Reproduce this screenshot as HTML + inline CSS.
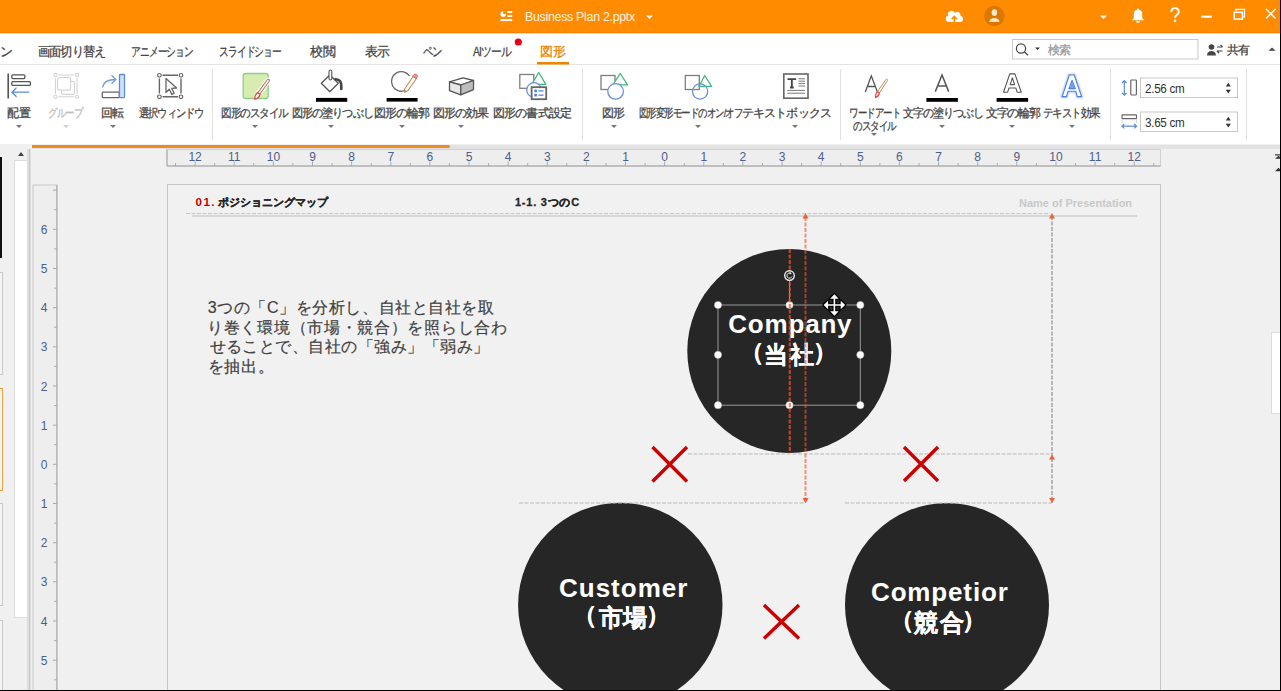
<!DOCTYPE html>
<html lang="ja">
<head>
<meta charset="utf-8">
<style>
html,body{margin:0;padding:0}
body{width:1281px;height:691px;overflow:hidden;position:relative;background:#f0f0f0;font-family:"Liberation Sans",sans-serif;color:#333}
.a{position:absolute}
.t{position:absolute;white-space:nowrap;line-height:1}
svg{position:absolute;left:0;top:0;overflow:visible}
.rn{font-size:12px;color:#4a5f8a}
</style>
</head>
<body>
<!-- chrome backgrounds -->
<div class="a" style="left:0;top:0;width:1281px;height:33px;background:#ff8b00"></div>
<div class="a" style="left:0;top:32px;width:1281px;height:1px;background:#f88000"></div>
<div class="a" style="left:0;top:33px;width:1281px;height:111px;background:#fff"></div>
<div class="a" style="left:0;top:64px;width:1281px;height:1px;background:#e4e4e4"></div>
<div class="a" style="left:0;top:33px;width:1281px;height:1px;background:#ffd9a8"></div>
<div class="a" style="left:32px;top:145px;width:1248px;height:4px;background:#e2e2e2"></div>
<div class="a" style="left:32px;top:145px;width:418px;height:3px;background:#f08a1c;border-radius:0 2px 2px 0"></div>

<!-- left panel -->
<div class="a" style="left:0;top:157px;width:2px;height:101px;background:#111"></div>
<div class="a" style="left:-100px;top:272px;width:101px;height:101px;border:1px solid #c8c8c8;background:#f4f4f4"></div>
<div class="a" style="left:-100px;top:388px;width:101px;height:101px;border:1.5px solid #f0a040;background:#f4f4f4"></div>
<div class="a" style="left:-100px;top:503px;width:101px;height:101px;border:1px solid #c8c8c8;background:#f4f4f4"></div>
<div class="a" style="left:-100px;top:620px;width:101px;height:101px;border:1px solid #c8c8c8;background:#f4f4f4"></div>
<div class="a" style="left:14px;top:160px;width:12px;height:456px;background:#fff;border:1px solid #dcdcdc"></div>
<div class="a" style="left:18px;top:152px;width:0;height:0;border-left:3px solid transparent;border-right:3px solid transparent;border-bottom:4px solid #444"></div>
<div class="a" style="left:27px;top:149px;width:4px;height:542px;background:#dedede"></div>
<div class="a" style="left:29px;top:149px;width:1px;height:542px;background:#c8c8c8"></div>

<!-- right scroll -->
<svg width="1281" height="691"><g fill="#333"><rect x="1275" y="154.3" width="6" height="1.2"/><path d="M1275 158.8 L1278.5 155.8 L1282 158.8Z"/><path d="M1275 171.3 L1278.5 167.8 L1282 171.3Z"/></g></svg>
<div class="a" style="left:1271px;top:332px;width:9px;height:80px;background:#fff;border:1px solid #dcdcdc;border-right:none"></div>

<!-- rulers -->
<svg width="1281" height="691">
<g id="hruler">
<rect x="167" y="149.5" width="993.5" height="16.5" fill="#eeeeee" stroke="#d0d0d0" stroke-width="1"/>
<line x1="167" y1="166" x2="1160.5" y2="166" stroke="#b4b4b4" stroke-width="1.3"/><line x1="167" y1="149.5" x2="167" y2="166" stroke="#b4b4b4" stroke-width="1.3"/>
</g>
<g id="vruler">
<rect x="33" y="185" width="24" height="600" fill="#eeeeee" stroke="#c8c8c8" stroke-width="1"/>
<line x1="56.8" y1="185" x2="56.8" y2="691" stroke="#b4b4b4" stroke-width="1.3"/>
</g>
<g stroke="#aaaaaa" stroke-width="1" id="ticks"><line x1="175.5" y1="163" x2="175.5" y2="166" /><line x1="195.1" y1="161.5" x2="195.1" y2="166" /><line x1="214.7" y1="163" x2="214.7" y2="166" /><line x1="234.2" y1="161.5" x2="234.2" y2="166" /><line x1="253.8" y1="163" x2="253.8" y2="166" /><line x1="273.4" y1="161.5" x2="273.4" y2="166" /><line x1="292.9" y1="163" x2="292.9" y2="166" /><line x1="312.5" y1="161.5" x2="312.5" y2="166" /><line x1="332.1" y1="163" x2="332.1" y2="166" /><line x1="351.6" y1="161.5" x2="351.6" y2="166" /><line x1="371.2" y1="163" x2="371.2" y2="166" /><line x1="390.8" y1="161.5" x2="390.8" y2="166" /><line x1="410.3" y1="163" x2="410.3" y2="166" /><line x1="429.9" y1="161.5" x2="429.9" y2="166" /><line x1="449.4" y1="163" x2="449.4" y2="166" /><line x1="469.0" y1="161.5" x2="469.0" y2="166" /><line x1="488.6" y1="163" x2="488.6" y2="166" /><line x1="508.1" y1="161.5" x2="508.1" y2="166" /><line x1="527.7" y1="163" x2="527.7" y2="166" /><line x1="547.3" y1="161.5" x2="547.3" y2="166" /><line x1="566.8" y1="163" x2="566.8" y2="166" /><line x1="586.4" y1="161.5" x2="586.4" y2="166" /><line x1="606.0" y1="163" x2="606.0" y2="166" /><line x1="625.5" y1="161.5" x2="625.5" y2="166" /><line x1="645.1" y1="163" x2="645.1" y2="166" /><line x1="664.7" y1="161.5" x2="664.7" y2="166" /><line x1="684.2" y1="163" x2="684.2" y2="166" /><line x1="703.8" y1="161.5" x2="703.8" y2="166" /><line x1="723.4" y1="163" x2="723.4" y2="166" /><line x1="742.9" y1="161.5" x2="742.9" y2="166" /><line x1="762.5" y1="163" x2="762.5" y2="166" /><line x1="782.1" y1="161.5" x2="782.1" y2="166" /><line x1="801.6" y1="163" x2="801.6" y2="166" /><line x1="821.2" y1="161.5" x2="821.2" y2="166" /><line x1="840.7" y1="163" x2="840.7" y2="166" /><line x1="860.3" y1="161.5" x2="860.3" y2="166" /><line x1="879.9" y1="163" x2="879.9" y2="166" /><line x1="899.4" y1="161.5" x2="899.4" y2="166" /><line x1="919.0" y1="163" x2="919.0" y2="166" /><line x1="938.6" y1="161.5" x2="938.6" y2="166" /><line x1="958.1" y1="163" x2="958.1" y2="166" /><line x1="977.7" y1="161.5" x2="977.7" y2="166" /><line x1="997.3" y1="163" x2="997.3" y2="166" /><line x1="1016.8" y1="161.5" x2="1016.8" y2="166" /><line x1="1036.4" y1="163" x2="1036.4" y2="166" /><line x1="1056.0" y1="161.5" x2="1056.0" y2="166" /><line x1="1075.5" y1="163" x2="1075.5" y2="166" /><line x1="1095.1" y1="161.5" x2="1095.1" y2="166" /><line x1="1114.7" y1="163" x2="1114.7" y2="166" /><line x1="1134.2" y1="161.5" x2="1134.2" y2="166" /><line x1="1153.8" y1="163" x2="1153.8" y2="166" /><line x1="53" y1="190.1" x2="57" y2="190.1" /><line x1="54" y1="209.7" x2="57" y2="209.7" /><line x1="53" y1="229.3" x2="57" y2="229.3" /><line x1="54" y1="248.9" x2="57" y2="248.9" /><line x1="53" y1="268.5" x2="57" y2="268.5" /><line x1="54" y1="288.1" x2="57" y2="288.1" /><line x1="53" y1="307.6" x2="57" y2="307.6" /><line x1="54" y1="327.2" x2="57" y2="327.2" /><line x1="53" y1="346.8" x2="57" y2="346.8" /><line x1="54" y1="366.4" x2="57" y2="366.4" /><line x1="53" y1="386.0" x2="57" y2="386.0" /><line x1="54" y1="405.6" x2="57" y2="405.6" /><line x1="53" y1="425.2" x2="57" y2="425.2" /><line x1="54" y1="444.7" x2="57" y2="444.7" /><line x1="53" y1="464.3" x2="57" y2="464.3" /><line x1="54" y1="483.9" x2="57" y2="483.9" /><line x1="53" y1="503.5" x2="57" y2="503.5" /><line x1="54" y1="523.1" x2="57" y2="523.1" /><line x1="53" y1="542.7" x2="57" y2="542.7" /><line x1="54" y1="562.2" x2="57" y2="562.2" /><line x1="53" y1="581.8" x2="57" y2="581.8" /><line x1="54" y1="601.4" x2="57" y2="601.4" /><line x1="53" y1="621.0" x2="57" y2="621.0" /><line x1="54" y1="640.6" x2="57" y2="640.6" /><line x1="53" y1="660.2" x2="57" y2="660.2" /><line x1="54" y1="679.8" x2="57" y2="679.8" /></g>
</svg>
<span class="t rn" style="left:175.1px;top:151px;width:40px;text-align:center">12</span><span class="t rn" style="left:214.2px;top:151px;width:40px;text-align:center">11</span><span class="t rn" style="left:253.4px;top:151px;width:40px;text-align:center">10</span><span class="t rn" style="left:292.5px;top:151px;width:40px;text-align:center">9</span><span class="t rn" style="left:331.6px;top:151px;width:40px;text-align:center">8</span><span class="t rn" style="left:370.8px;top:151px;width:40px;text-align:center">7</span><span class="t rn" style="left:409.9px;top:151px;width:40px;text-align:center">6</span><span class="t rn" style="left:449.0px;top:151px;width:40px;text-align:center">5</span><span class="t rn" style="left:488.1px;top:151px;width:40px;text-align:center">4</span><span class="t rn" style="left:527.3px;top:151px;width:40px;text-align:center">3</span><span class="t rn" style="left:566.4px;top:151px;width:40px;text-align:center">2</span><span class="t rn" style="left:605.5px;top:151px;width:40px;text-align:center">1</span><span class="t rn" style="left:644.7px;top:151px;width:40px;text-align:center">0</span><span class="t rn" style="left:683.8px;top:151px;width:40px;text-align:center">1</span><span class="t rn" style="left:722.9px;top:151px;width:40px;text-align:center">2</span><span class="t rn" style="left:762.1px;top:151px;width:40px;text-align:center">3</span><span class="t rn" style="left:801.2px;top:151px;width:40px;text-align:center">4</span><span class="t rn" style="left:840.3px;top:151px;width:40px;text-align:center">5</span><span class="t rn" style="left:879.4px;top:151px;width:40px;text-align:center">6</span><span class="t rn" style="left:918.6px;top:151px;width:40px;text-align:center">7</span><span class="t rn" style="left:957.7px;top:151px;width:40px;text-align:center">8</span><span class="t rn" style="left:996.8px;top:151px;width:40px;text-align:center">9</span><span class="t rn" style="left:1036.0px;top:151px;width:40px;text-align:center">10</span><span class="t rn" style="left:1075.1px;top:151px;width:40px;text-align:center">11</span><span class="t rn" style="left:1114.2px;top:151px;width:40px;text-align:center">12</span><span class="t rn" style="left:34px;top:223.8px;width:20px;text-align:center">6</span><span class="t rn" style="left:34px;top:263.0px;width:20px;text-align:center">5</span><span class="t rn" style="left:34px;top:302.1px;width:20px;text-align:center">4</span><span class="t rn" style="left:34px;top:341.3px;width:20px;text-align:center">3</span><span class="t rn" style="left:34px;top:380.5px;width:20px;text-align:center">2</span><span class="t rn" style="left:34px;top:419.7px;width:20px;text-align:center">1</span><span class="t rn" style="left:34px;top:458.8px;width:20px;text-align:center">0</span><span class="t rn" style="left:34px;top:498.0px;width:20px;text-align:center">1</span><span class="t rn" style="left:34px;top:537.2px;width:20px;text-align:center">2</span><span class="t rn" style="left:34px;top:576.3px;width:20px;text-align:center">3</span><span class="t rn" style="left:34px;top:615.5px;width:20px;text-align:center">4</span><span class="t rn" style="left:34px;top:654.7px;width:20px;text-align:center">5</span>

<!-- slide -->
<div class="a" style="left:166.5px;top:184px;width:992px;height:600px;background:#f1f1f1;border:1.5px solid #c6c6c6"></div>

<svg width="1281" height="691">
<!-- header lines -->
<line x1="186" y1="213.5" x2="1050" y2="213.5" stroke="#c6c6c6" stroke-width="1.2" stroke-dasharray="4 1.5"/>
<line x1="192" y1="216" x2="1137" y2="216" stroke="#cccccc" stroke-width="1.5"/>
<!-- circles -->
<circle cx="789.3" cy="351" r="102" fill="#262626"/>
<circle cx="620.3" cy="605" r="102.2" fill="#262626"/>
<circle cx="947" cy="605" r="102" fill="#262626"/>
<!-- guides gray -->
<g stroke="#bababa" stroke-width="1.2" stroke-dasharray="4 1.5" fill="none">
<line x1="688" y1="454" x2="1052" y2="454"/>
<line x1="519" y1="503" x2="805" y2="503"/>
<line x1="845" y1="503" x2="1052" y2="503"/>
</g>
<line x1="1052" y1="216" x2="1052" y2="503" stroke="#a4a4a4" stroke-width="1.5" stroke-dasharray="4 1.5"/>
<!-- orange guide -->

<g fill="#e8643c">
<path d="M802.5 218.5 L805.5 213 L808.5 218.5Z"/>
<path d="M802.5 498 L805.5 503.5 L808.5 498Z"/>
<path d="M1049 218.5 L1052 213 L1055 218.5Z"/>
<path d="M1049 459.5 L1052 454.5 L1055 459.5Z"/>
<path d="M1049 498 L1052 503 L1055 498Z"/>
</g>
<!-- red dashed center -->

<!-- crosses -->
<g stroke="#cc0000" stroke-width="3.4" stroke-linecap="butt">
<path d="M652.5 447 L687 481.5 M687 447 L652.5 481.5"/>
<path d="M904 447 L938 481 M938 447 L904 481"/>
<path d="M764 605 L799 638.5 M799 605 L764 638.5"/>
</g>
</svg>
<!-- title bar icons -->
<svg width="1281" height="691">
<g fill="#fff">
<!-- slide icon -->
<path d="M503.2 14.1 L503.2 11.3 A2.8 2.8 0 1 0 506 14.1Z"/>
<rect x="507.4" y="11.1" width="4.8" height="1.8"/>
<rect x="507.4" y="15.2" width="4.8" height="1.8"/>
<rect x="500.5" y="19.1" width="11.7" height="2"/>
<path d="M646 15.5 h7 l-3.5 3.5z"/>
<!-- cloud -->
<path transform="translate(945.5 0) scale(0.9 1) translate(-945.5 0)" d="M948.5 22 a3.2 3.2 0 0 1 -0.3 -6.3 a4.2 4.2 0 0 1 7.8 -2.8 a3.6 3.6 0 0 1 6.2 2.8 a3.2 3.2 0 0 1 0.4 6.3z"/>
<path d="M1100 15.5 h7 l-3.5 3.5z"/>
<!-- bell -->
<path d="M1138 8.5 a1 1 0 0 1 1 1.2 a4.2 4.5 0 0 1 3.2 4.5 v3.8 l2 2.2 h-12.4 l2 -2.2 v-3.8 a4.2 4.5 0 0 1 3.2 -4.5 a1 1 0 0 1 1 -1.2z"/>
<path d="M1136 21 h4 a2 2 0 0 1 -4 0z"/>
<rect x="1201.3" y="15.6" width="10.5" height="2.2"/>
</g>
<circle cx="994.4" cy="16" r="10.2" fill="#dd7700"/>
<g fill="#ffe8c8">
<ellipse cx="994.4" cy="12.6" rx="2.8" ry="3.4"/>
<path d="M989.3 22 a5.1 4 0 0 1 10.2 0z"/>
</g>
<path d="M954.3 22.5 v-5.8 M951.6 19.2 l2.7 -2.7 l2.7 2.7" stroke="#ff8b00" stroke-width="1.6" fill="none"/>
<g stroke="#fff" fill="none" stroke-width="1.4">
<path d="M1171.3 11.8 a3.7 3.7 0 1 1 5.6 3.1 c-1.4 0.9 -1.9 1.5 -1.9 3.2" stroke-width="1.9"/>
<path d="M1236 11 v-1.6 h8.5 v7.5 h-1.6" stroke-width="1.2"/>
<rect x="1234.2" y="12.3" width="8.2" height="6.8" stroke-width="1.5"/>
<path d="M1266 9 L1275.5 18.5 M1275.5 9 L1266 18.5" stroke-width="1.5"/>
</g>
<circle cx="1175" cy="20.9" r="1.3" fill="#fff"/>

<!-- red dot -->
<circle cx="518.3" cy="42" r="3.6" fill="#e60012"/>
<rect x="537" y="62" width="32" height="2.5" fill="#f08300"/>

<!-- search box -->
<rect x="1012.5" y="39.5" width="185.5" height="19.5" fill="#fff" stroke="#c8c8c8" stroke-width="1"/>
<circle cx="1021" cy="48.5" r="4.6" fill="none" stroke="#444" stroke-width="1.2"/>
<path d="M1024.3 51.8 L1028 55.3" stroke="#444" stroke-width="1.3"/>
<path d="M1035 47.5 h5 l-2.5 2.5z" fill="#333"/>
<!-- share icon -->
<circle cx="1211.5" cy="47" r="2.8" fill="#444"/>
<path d="M1207 55.5 a4.5 4.5 0 0 1 9 0z" fill="#444"/>
<path d="M1217 47 h5.5 M1220.5 45 l2 2 M1217 51 h5.5 M1219 53 l-2 -2" stroke="#444" stroke-width="1.2" fill="none"/>
<path d="M1268.5 50.8 L1272 47.5 L1275.5 50.8z" fill="#444"/>

<!-- separators -->
<g fill="#e0e0e0">
<rect x="212" y="69" width="1" height="71"/>
<rect x="582" y="69" width="1" height="71"/>
<rect x="840" y="69" width="1" height="71"/>
<rect x="1110" y="69" width="1" height="71"/>
<rect x="1246" y="69" width="1" height="71"/>
</g>

<!-- ribbon icons -->
<!-- align -->
<rect x="7.4" y="73.5" width="1.6" height="25" fill="#555"/>
<rect x="11.8" y="74.8" width="13" height="3.8" rx="1" fill="none" stroke="#555" stroke-width="1.3"/>
<rect x="11.8" y="81.6" width="18.6" height="3.8" rx="1" fill="none" stroke="#555" stroke-width="1.3"/>
<path d="M12 92.2 H29.3 M16.5 87.6 L12 92.2 L16.5 96.8" fill="none" stroke="#5b8bd9" stroke-width="1.3"/>
<!-- group (disabled) -->
<g fill="none" stroke="#d4d4d4" stroke-width="1.1">
<circle cx="55.5" cy="75" r="1.6"/><circle cx="77.1" cy="75" r="1.6"/><circle cx="55.5" cy="96.8" r="1.6"/><circle cx="77.1" cy="96.8" r="1.6"/>
<path d="M58.5 75 H74 M58.5 96.8 H74 M55.5 78 V94 M77.1 78 V94"/>
<rect x="61.5" y="81.4" width="13" height="13" rx="1.5" fill="#fff"/>
<rect x="57.6" y="77.5" width="13" height="12.6" rx="1.5" fill="#fff"/>
</g>
<!-- rotate -->
<rect x="102.3" y="92.2" width="17" height="5.5" rx="0.8" fill="#fff" stroke="#666" stroke-width="1.3"/>
<rect x="119.5" y="74.5" width="5" height="23.2" rx="0.8" fill="#cfe1fb" stroke="#5b8bd9" stroke-width="1.3"/>
<path d="M102.4 87.4 C103.5 82 108 79.5 115.5 79.5 M111.5 75.3 L115.8 79.5 L111.5 83.7" fill="none" stroke="#6d9be0" stroke-width="1.3"/>
<!-- select window -->
<g fill="none" stroke="#666" stroke-width="1.2">
<circle cx="159.4" cy="75.3" r="1.8"/><circle cx="181" cy="75.3" r="1.8"/><circle cx="159.4" cy="96.8" r="1.8"/><circle cx="181" cy="96.8" r="1.8"/>
<path d="M162.5 75.3 H178 M162.5 96.8 H178 M159.4 78.5 V93.6 M181 78.5 V93.6" stroke-width="1.4"/>
<path d="M166 78.5 V92.5 L169.3 89.3 L171.8 94.4 L174.2 93.2 L171.7 88.3 L176.6 88Z" stroke-width="1.3" stroke-linejoin="round"/>
</g>
<!-- shape style -->
<rect x="243.2" y="73.5" width="25" height="25" rx="2.5" fill="#d6ecb0" stroke="#8ecf8a" stroke-width="1.3"/>
<path d="M268.2 80.5 L257.5 95" stroke="#fff" stroke-width="5.5" stroke-linecap="round"/>
<path d="M268.2 80.5 L258.6 93.8" stroke="#b87058" stroke-width="3.4" stroke-linecap="round"/>
<path d="M268.2 80.5 L258.6 93.8" stroke="#fff" stroke-width="1.4" stroke-linecap="round"/>
<path d="M257.6 92.6 L260 94.4 C259.6 96.8 257.6 98.6 254.8 99.2 C254.8 96.4 255.8 94 257.6 92.6Z" fill="#fff" stroke="#e84545" stroke-width="1.3"/>
<!-- fill bucket -->
<path d="M321.3 83.3 L329.8 75 L338.3 83.3 L329.8 91.7Z" fill="#fff" stroke="#555" stroke-width="1.3" stroke-linejoin="round"/>
<rect x="329" y="70" width="2.8" height="10" rx="1.4" fill="#fff" stroke="#555" stroke-width="1.1"/>
<path d="M335.5 79.2 C339.8 79 341.6 82.5 341.3 86.5 L341.3 89" fill="none" stroke="#444" stroke-width="2.6" stroke-linecap="round"/>
<rect x="316" y="97.9" width="31.2" height="3.9" fill="#000"/>
<!-- outline -->
<path d="M405 90.5 A9.8 9.8 0 1 1 409.5 76" fill="none" stroke="#666" stroke-width="1.3"/>
<path d="M413 76.5 L416.5 78.5 L407.5 91 L404.5 92.3 L404.5 89.2Z" fill="#fff" stroke="#c08a5a" stroke-width="1.1" stroke-linejoin="round"/>
<path d="M412.6 76.3 L414 74.5 C414.6 73.9 415.8 73.9 416.6 74.6 C417.4 75.3 417.6 76.4 417.2 77.1 L416.2 78.6Z" fill="#f08c8c" stroke="#e06a6a" stroke-width="0.8"/>
<path d="M404.6 89.5 L404.5 92.3 L406.8 91.3Z" fill="#c08a5a"/>
<rect x="386.6" y="98" width="31" height="3.6" fill="#000"/>
<!-- effects box -->
<path d="M449.5 81.8 L463 77.8 L473.5 80.5 L460.8 85Z" fill="#fff" stroke="#555" stroke-width="1.3" stroke-linejoin="round"/>
<path d="M449.5 81.8 L460.8 85 L460.8 94.8 L449.5 90.6Z" fill="#e8e8e8" stroke="#555" stroke-width="1.3" stroke-linejoin="round"/>
<path d="M460.8 85 L473.5 80.5 L473.5 89.6 L460.8 94.8Z" fill="#bdbdbd" stroke="#555" stroke-width="1.3" stroke-linejoin="round"/>
<!-- format shape -->
<rect x="519.8" y="74.5" width="14" height="13.8" fill="none" stroke="#7e7e7e" stroke-width="1.3"/>
<path d="M538.7 72.5 L545.8 84.3 L531.8 84.3Z" fill="#fff" stroke="#3cba7c" stroke-width="1.3" stroke-linejoin="round"/>
<circle cx="534" cy="90" r="7.3" fill="#fff" stroke="#6c8fd8" stroke-width="1.3"/>
<rect x="531.6" y="87.2" width="14.6" height="12" fill="#fff" stroke="#666" stroke-width="1.8"/>
<rect x="534.3" y="89.6" width="2.6" height="2.6" fill="#4a7fe0"/>
<rect x="534.3" y="93.8" width="2.6" height="2.6" fill="#4a7fe0"/>
<path d="M538.5 90.9 H543.5 M538.5 95.1 H543.5" stroke="#4a7fe0" stroke-width="1.2"/>
<!-- shapes -->
<rect x="601" y="75.5" width="14" height="14" fill="none" stroke="#7e7e7e" stroke-width="1.3"/>
<path d="M620.2 73.5 L627.6 84.8 L612.8 84.8Z" fill="#fff" stroke="#3cba7c" stroke-width="1.3" stroke-linejoin="round"/>
<circle cx="615.6" cy="91.4" r="7.8" fill="#fff" stroke="#6c8fd8" stroke-width="1.3"/>
<!-- shape mode -->
<rect x="685.3" y="75.5" width="14" height="14" fill="none" stroke="#7e7e7e" stroke-width="1.3"/>
<path d="M704.7 75.5 L711.6 86.3 L699 86.3Z" fill="none" stroke="#3cba7c" stroke-width="1.3" stroke-linejoin="round"/>
<circle cx="700.1" cy="91.5" r="7.6" fill="none" stroke="#6c8fd8" stroke-width="1.3"/>
<!-- textbox -->
<rect x="783.8" y="74" width="24.2" height="24.2" fill="#fff" stroke="#666" stroke-width="1.6"/>
<path d="M787.5 79.2 H796.2 M791.85 79.2 V87.5 M790 87.5 H793.7" stroke="#444" stroke-width="1.8" fill="none"/>
<path d="M798.5 78.8 H805 M798.5 81.2 H805 M798.5 83.6 H805 M798.5 86 H805 M787.3 90.4 H805 M787.3 93.2 H805" stroke="#666" stroke-width="0.9"/>
<!-- wordart -->
<path d="M865.3 92 L871.3 75.8 L877.4 92 M867.3 86.5 H875.3" fill="none" stroke="#555" stroke-width="1.3"/>
<path d="M886 79.5 C886.8 78.8 888 79.5 887.5 80.5 L879.3 93 L877.3 91.6Z" fill="#fff" stroke="#c08a5a" stroke-width="1"/>
<path d="M877.2 91.5 L879.4 93 C878.8 95.5 877.5 97 875.5 97.5 C875.3 95.3 876 93 877.2 91.5Z" fill="#fff" stroke="#e84545" stroke-width="1.2"/>
<!-- text fill A -->
<path d="M935.3 91.6 L942 74.9 L948.7 91.6 M937.7 86 H946.3" fill="none" stroke="#555" stroke-width="1.5"/>
<rect x="926.4" y="98" width="31.5" height="3.8" fill="#000"/>
<!-- text outline A -->
<path d="M1003.5 92.2 L1009.8 73.9 L1014.9 73.9 L1021.3 92.2 L1017.2 92.2 L1015.8 88 L1009 88 L1007.6 92.2Z M1010.2 84.6 L1014.6 84.6 L1012.4 77.8Z" fill="#fff" stroke="#555" stroke-width="1.1" stroke-linejoin="round"/>
<rect x="996.6" y="98" width="31.5" height="3.8" fill="#000"/>
<!-- text effect A -->
<path d="M1062.2 96.6 L1069.3 75 L1074.2 75 L1081.6 96.6 L1077.4 96.6 L1075.9 91.3 L1068 91.3 L1066.4 96.6Z M1069 88.6 L1075.3 88.6 L1072.1 80.3Z" fill="none" stroke="#e2ecfc" stroke-width="4.5" stroke-linejoin="round"/>
<path d="M1062.2 96.6 L1069.3 75 L1074.2 75 L1081.6 96.6 L1077.4 96.6 L1075.9 91.3 L1068 91.3 L1066.4 96.6Z M1069 88.6 L1075.3 88.6 L1072.1 80.3Z" fill="#fff" stroke="#c0d6fa" stroke-width="2.6" stroke-linejoin="round"/>
<path d="M1062.2 96.6 L1069.3 75 L1074.2 75 L1081.6 96.6 L1077.4 96.6 L1075.9 91.3 L1068 91.3 L1066.4 96.6Z M1069 88.6 L1075.3 88.6 L1072.1 80.3Z" fill="#fff" stroke="#4d80de" stroke-width="1.1" stroke-linejoin="round"/>
<path d="M1069.8 88 L1074.5 88 L1072.1 81.5Z" fill="#6fa0ea"/>
<!-- size icons -->
<path d="M1124.3 80.8 V95 M1122 83 L1124.3 80.6 L1126.6 83 M1122 92.8 L1124.3 95.2 L1126.6 92.8" fill="none" stroke="#5b8bd9" stroke-width="1.2"/>
<rect x="1130.8" y="80" width="5.6" height="15" rx="0.8" fill="#fff" stroke="#666" stroke-width="1.2"/>
<rect x="1122" y="114.8" width="14.5" height="3.8" rx="0.8" fill="#fff" stroke="#666" stroke-width="1.2"/>
<path d="M1122 119.5 V123 M1136.5 119.5 V123" stroke="#999" stroke-width="0.8" stroke-dasharray="1 1"/>
<path d="M1122 126.2 H1136.5 M1124.2 124 L1121.9 126.2 L1124.2 128.4 M1134.3 124 L1136.6 126.2 L1134.3 128.4" fill="none" stroke="#5b8bd9" stroke-width="1.2"/>
<rect x="1140.5" y="78" width="97" height="19.5" fill="#fff" stroke="#c8c8c8" stroke-width="1"/>
<rect x="1140.5" y="112" width="97" height="19.5" fill="#fff" stroke="#c8c8c8" stroke-width="1"/>
<g fill="#333">
<path d="M1225.8 86.5 L1228.3 82.8 L1230.8 86.5Z M1225.8 89.8 L1228.3 93.4 L1230.8 89.8Z"/>
<path d="M1225.8 120.5 L1228.3 116.8 L1230.8 120.5Z M1225.8 123.8 L1228.3 127.4 L1230.8 123.8Z"/>
</g>
</svg>
<span class="t" style="left:524.51px;top:10.8px;font-size:12.5px;color:#fff3e0;letter-spacing:-0.3px;transform:scaleX(0.9927);transform-origin:0 0;">Business Plan 2.pptx</span>
<span class="t" style="left:0px;top:45.7px;font-size:12.5px;color:#444444;-webkit-text-stroke:0.28px #444444;">ン</span>
<span class="t" style="left:37.5px;top:46.2px;font-size:12.5px;color:#444444;letter-spacing:-1.2px;transform:scaleX(0.9465);transform-origin:0 0;-webkit-text-stroke:0.28px #444444;">画面切り替え</span>
<span class="t" style="left:130.85px;top:46.2px;font-size:12.5px;color:#444444;letter-spacing:-1.2px;transform:scaleX(0.7506);transform-origin:0 0;-webkit-text-stroke:0.28px #444444;">アニメーション</span>
<span class="t" style="left:219.25px;top:46.2px;font-size:12.5px;color:#444444;letter-spacing:-1.2px;transform:scaleX(0.7518);transform-origin:0 0;-webkit-text-stroke:0.28px #444444;">スライドショー</span>
<span class="t" style="left:310px;top:46.2px;font-size:12.5px;color:#444444;letter-spacing:-0.5px;-webkit-text-stroke:0.28px #444444;">校閲</span>
<span class="t" style="left:364.5px;top:46.2px;font-size:12.5px;color:#444444;letter-spacing:-1.2px;transform:scaleX(0.9879);transform-origin:0 0;-webkit-text-stroke:0.28px #444444;">表示</span>
<span class="t" style="left:423.0px;top:46.2px;font-size:12.5px;color:#444444;letter-spacing:-1.2px;transform:scaleX(0.7983);transform-origin:0 0;-webkit-text-stroke:0.28px #444444;">ペン</span>
<span class="t" style="left:472.5px;top:46.2px;font-size:12.5px;color:#444444;letter-spacing:-1.2px;transform:scaleX(0.8333);transform-origin:0 0;-webkit-text-stroke:0.28px #444444;">AIツール</span>
<span class="t" style="left:540px;top:46.2px;font-size:12.5px;color:#f07f00;letter-spacing:-0.5px;-webkit-text-stroke:0.28px #f07f00;">図形</span>
<span class="t" style="left:1047.8px;top:44px;font-size:12px;color:#9a9a9a;letter-spacing:-1.2px;-webkit-text-stroke:0.28px #9a9a9a;">検索</span>
<span class="t" style="left:1227px;top:44px;font-size:12px;color:#404040;letter-spacing:-1.0px;-webkit-text-stroke:0.28px #404040;">共有</span>
<span class="t" style="left:6.7px;top:108px;font-size:11.5px;color:#444444;letter-spacing:-0.1px;-webkit-text-stroke:0.28px #444444;">配置</span>
<span class="t" style="left:47.81px;top:108px;font-size:11.5px;color:#bdbdbd;letter-spacing:-1.2px;transform:scaleX(0.788);transform-origin:0 0;-webkit-text-stroke:0.28px #bdbdbd;">グループ</span>
<span class="t" style="left:101px;top:108px;font-size:11.5px;color:#444444;letter-spacing:-1.0px;-webkit-text-stroke:0.28px #444444;">回転</span>
<span class="t" style="left:139.0px;top:108px;font-size:11.5px;color:#444444;letter-spacing:-1.2px;transform:scaleX(0.8556);transform-origin:0 0;-webkit-text-stroke:0.28px #444444;">選択ウィンドウ</span>
<span class="t" style="left:221.12px;top:108px;font-size:11.5px;color:#444444;letter-spacing:-1.2px;transform:scaleX(0.8839);transform-origin:0 0;-webkit-text-stroke:0.28px #444444;">図形のスタイル</span>
<span class="t" style="left:291.57px;top:108px;font-size:11.5px;color:#444444;letter-spacing:-1.2px;transform:scaleX(0.9338);transform-origin:0 0;-webkit-text-stroke:0.28px #444444;">図形の塗りつぶし</span>
<span class="t" style="left:373.5px;top:108px;font-size:11.5px;color:#444444;letter-spacing:-0.825px;-webkit-text-stroke:0.28px #444444;">図形の輪郭</span>
<span class="t" style="left:433px;top:108px;font-size:11.5px;color:#444444;letter-spacing:-1.0px;-webkit-text-stroke:0.28px #444444;">図形の効果</span>
<span class="t" style="left:492.7px;top:108px;font-size:11.5px;color:#444444;letter-spacing:-0.75px;-webkit-text-stroke:0.28px #444444;">図形の書式設定</span>
<span class="t" style="left:602px;top:108px;font-size:11.5px;color:#444444;letter-spacing:-0.7px;-webkit-text-stroke:0.28px #444444;">図形</span>
<span class="t" style="left:638.72px;top:108px;font-size:11.5px;color:#444444;letter-spacing:-1.2px;transform:scaleX(0.7848);transform-origin:0 0;-webkit-text-stroke:0.28px #444444;">図形変形モードのオン/オフ</span>
<span class="t" style="left:741.5px;top:108px;font-size:11.5px;color:#444444;letter-spacing:-0.786px;-webkit-text-stroke:0.28px #444444;">テキストボックス</span>
<span class="t" style="left:848.71px;top:108px;font-size:11.5px;color:#444444;letter-spacing:-1.2px;transform:scaleX(0.7887);transform-origin:0 0;-webkit-text-stroke:0.28px #444444;">ワードアート</span>
<span class="t" style="left:852.9px;top:120.6px;font-size:11.5px;color:#444444;letter-spacing:-1.2px;transform:scaleX(0.7935);transform-origin:0 0;-webkit-text-stroke:0.28px #444444;">のスタイル</span>
<span class="t" style="left:902.7px;top:108px;font-size:11.5px;color:#444444;letter-spacing:-1.2px;transform:scaleX(0.9241);transform-origin:0 0;-webkit-text-stroke:0.28px #444444;">文字の塗りつぶし</span>
<span class="t" style="left:985.7px;top:108px;font-size:11.5px;color:#444444;letter-spacing:-1.175px;-webkit-text-stroke:0.28px #444444;">文字の輪郭</span>
<span class="t" style="left:1042.93px;top:108px;font-size:11.5px;color:#444444;letter-spacing:-1.2px;transform:scaleX(0.8738);transform-origin:0 0;-webkit-text-stroke:0.28px #444444;">テキスト効果</span>
<span class="t" style="left:1144.5px;top:82.6px;font-size:12.5px;color:#303030;letter-spacing:-0.3px;transform:scaleX(0.9313);transform-origin:0 0;">2.56 cm</span>
<span class="t" style="left:1144.5px;top:116.6px;font-size:12.5px;color:#303030;letter-spacing:-0.3px;transform:scaleX(0.9313);transform-origin:0 0;">3.65 cm</span>
<span class="t" style="left:195.6px;top:195.7px;font-size:11.6px;color:#c00000;font-weight:700;letter-spacing:1.4px;">01.</span>
<span class="t" style="left:218px;top:197px;font-size:11px;color:#262626;font-weight:700;letter-spacing:-0.033px;-webkit-text-stroke:0.28px #262626;">ポジショニングマップ</span>
<span class="t" style="left:515px;top:197px;font-size:11px;color:#262626;font-weight:700;letter-spacing:0.75px;-webkit-text-stroke:0.28px #262626;">1-1. 3つのC</span>
<span class="t" style="left:1019px;top:198px;font-size:11px;color:#c8c8c8;font-weight:700;">Name of Presentation</span>
<span class="t" style="left:207.75px;top:299.6px;font-size:16px;color:#404040;letter-spacing:0.574px;-webkit-text-stroke:0.2px #404040;">3つの「C」を分析し、自社と自社を取</span>
<span class="t" style="left:207px;top:319.5px;font-size:16px;color:#404040;letter-spacing:0.706px;-webkit-text-stroke:0.2px #404040;">り巻く環境（市場・競合）を照らし合わ</span>
<span class="t" style="left:209.5px;top:339px;font-size:16px;color:#404040;letter-spacing:0.469px;-webkit-text-stroke:0.2px #404040;">せることで、自社の「強み」「弱み」</span>
<span class="t" style="left:207.5px;top:358.6px;font-size:16px;color:#404040;letter-spacing:0.9px;-webkit-text-stroke:0.2px #404040;">を抽出。</span>
<span class="t" style="left:728.3px;top:311.4px;font-size:26px;color:#fff;font-weight:700;letter-spacing:0.8px;">Company</span>
<span class="t" style="left:740px;top:340px;font-size:24px;color:#fff;font-weight:700;-webkit-text-stroke:0.3px #fff;">（</span>
<span class="t" style="left:764px;top:342.5px;font-size:24px;color:#fff;font-weight:700;letter-spacing:2.0px;-webkit-text-stroke:0.3px #fff;">当社</span>
<span class="t" style="left:813px;top:340px;font-size:24px;color:#fff;font-weight:700;-webkit-text-stroke:0.3px #fff;">）</span>
<span class="t" style="left:559px;top:574.8px;font-size:26px;color:#fff;font-weight:700;letter-spacing:1.0px;">Customer</span>
<span class="t" style="left:573px;top:602.7px;font-size:24px;color:#fff;font-weight:700;-webkit-text-stroke:0.3px #fff;">（</span>
<span class="t" style="left:598.6px;top:606.2px;font-size:24px;color:#fff;font-weight:700;letter-spacing:0.6px;-webkit-text-stroke:0.3px #fff;">市場</span>
<span class="t" style="left:646px;top:602.7px;font-size:24px;color:#fff;font-weight:700;-webkit-text-stroke:0.3px #fff;">）</span>
<span class="t" style="left:871px;top:579px;font-size:26px;color:#fff;font-weight:700;letter-spacing:0.85px;">Competior</span>
<span class="t" style="left:889.7px;top:608.2px;font-size:24px;color:#fff;font-weight:700;-webkit-text-stroke:0.3px #fff;">（</span>
<span class="t" style="left:914px;top:610.8px;font-size:24px;color:#fff;font-weight:700;letter-spacing:1.9px;-webkit-text-stroke:0.3px #fff;">競合</span>
<span class="t" style="left:962px;top:608.2px;font-size:24px;color:#fff;font-weight:700;-webkit-text-stroke:0.3px #fff;">）</span>
<svg width="1281" height="691">
<!-- selection -->
<rect x="718" y="305" width="142.3" height="100.2" fill="none" stroke="#9a9a9a" stroke-width="1"/>
<line x1="789.5" y1="281" x2="789.5" y2="305" stroke="#9a9a9a" stroke-width="1"/>
<g fill="#fff" stroke="#bbb" stroke-width="0.5">
<circle cx="718" cy="305" r="3.6"/><circle cx="789.5" cy="305" r="3.6"/><circle cx="860.3" cy="305" r="3.6"/>
<circle cx="718" cy="354.8" r="3.6"/><circle cx="860.3" cy="354.8" r="3.6"/>
<circle cx="718" cy="405.2" r="3.6"/><circle cx="789.5" cy="405.2" r="3.6"/><circle cx="860.3" cy="405.2" r="3.6"/>
</g>
<line x1="805.5" y1="217" x2="805.5" y2="500" stroke="rgba(235,85,45,0.62)" stroke-width="2" stroke-dasharray="4 1.5"/>
<line x1="789.8" y1="249" x2="789.8" y2="453" stroke="rgba(235,85,45,0.72)" stroke-width="2.2" stroke-dasharray="4 1.5"/>
<circle cx="789.5" cy="275.6" r="4.8" fill="#262626" stroke="#eee" stroke-width="1.4"/>
<path d="M791.9 276.6 A2.6 2.6 0 1 1 790.2 273.1" fill="none" stroke="#eee" stroke-width="1"/><path d="M789.6 271.9 L791.9 273.2 L789.9 274.6Z" fill="#eee"/>
<!-- move cursor -->
<g transform="translate(834.4 305)">
<path d="M0 -10.8 L4.3 -6.3 L0.8 -6.3 L0.8 -0.8 L6.3 -0.8 L6.3 -4.3 L10.8 0 L6.3 4.3 L6.3 0.8 L0.8 0.8 L0.8 6.3 L4.3 6.3 L0 10.8 L-4.3 6.3 L-0.8 6.3 L-0.8 0.8 L-6.3 0.8 L-6.3 4.3 L-10.8 0 L-6.3 -4.3 L-6.3 -0.8 L-0.8 -0.8 L-0.8 -6.3 L-4.3 -6.3Z" fill="#fff" stroke="#000" stroke-width="2.6" stroke-linejoin="round" paint-order="stroke"/>
</g>
</svg>


<div class="a" style="left:16px;top:124.5px;width:0;height:0;border-left:3px solid transparent;border-right:3px solid transparent;border-top:3px solid #777"></div><div class="a" style="left:110px;top:124.5px;width:0;height:0;border-left:3px solid transparent;border-right:3px solid transparent;border-top:3px solid #777"></div><div class="a" style="left:252px;top:124.5px;width:0;height:0;border-left:3px solid transparent;border-right:3px solid transparent;border-top:3px solid #777"></div><div class="a" style="left:328px;top:124.5px;width:0;height:0;border-left:3px solid transparent;border-right:3px solid transparent;border-top:3px solid #777"></div><div class="a" style="left:399px;top:124.5px;width:0;height:0;border-left:3px solid transparent;border-right:3px solid transparent;border-top:3px solid #777"></div><div class="a" style="left:458px;top:124.5px;width:0;height:0;border-left:3px solid transparent;border-right:3px solid transparent;border-top:3px solid #777"></div><div class="a" style="left:611px;top:124.5px;width:0;height:0;border-left:3px solid transparent;border-right:3px solid transparent;border-top:3px solid #777"></div><div class="a" style="left:695px;top:124.5px;width:0;height:0;border-left:3px solid transparent;border-right:3px solid transparent;border-top:3px solid #777"></div><div class="a" style="left:792px;top:124.5px;width:0;height:0;border-left:3px solid transparent;border-right:3px solid transparent;border-top:3px solid #777"></div><div class="a" style="left:939px;top:124.5px;width:0;height:0;border-left:3px solid transparent;border-right:3px solid transparent;border-top:3px solid #777"></div><div class="a" style="left:1009px;top:124.5px;width:0;height:0;border-left:3px solid transparent;border-right:3px solid transparent;border-top:3px solid #777"></div><div class="a" style="left:1069px;top:124.5px;width:0;height:0;border-left:3px solid transparent;border-right:3px solid transparent;border-top:3px solid #777"></div><div class="a" style="left:63px;top:124.5px;width:0;height:0;border-left:3px solid transparent;border-right:3px solid transparent;border-top:3px solid #cfcfcf"></div><div class="a" style="left:871px;top:132.5px;width:0;height:0;border-left:3px solid transparent;border-right:3px solid transparent;border-top:3px solid #777"></div>

<div class="a" style="left:1280px;top:0;width:1px;height:691px;background:#000"></div>
<div class="a" style="left:0;top:690px;width:1281px;height:1px;background:#000"></div>
</body>
</html>
